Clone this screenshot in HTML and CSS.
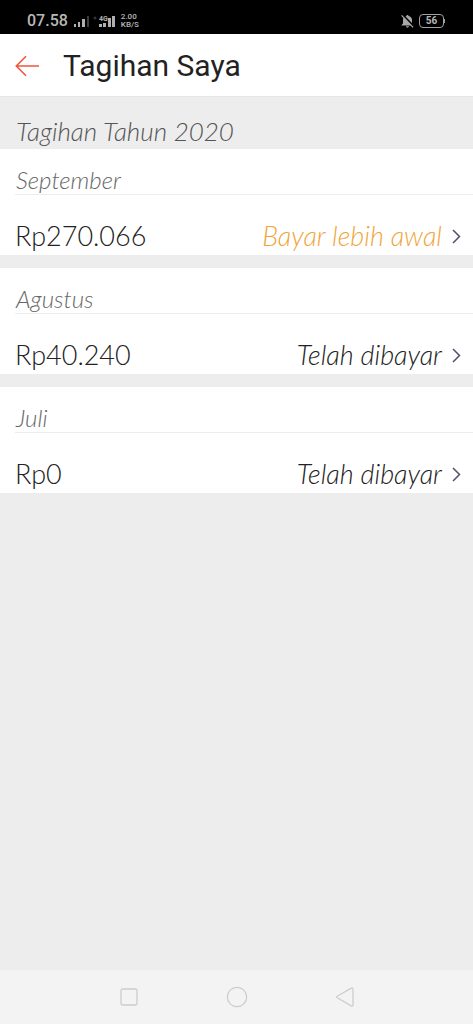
FILE: index.html
```html
<!DOCTYPE html>
<html lang="id">
<head>
<meta charset="utf-8">
<meta name="viewport" content="width=device-width, initial-scale=1">
<title>Tagihan Saya</title>
<link rel="stylesheet" href="styles.css">
</head>
<body>
<div class="status">
  <div class="status-group">
    <span class="clock">07.58</span>
    <svg class="signals" width="43" height="14" viewBox="0 0 43 14" aria-hidden="true">
      <g fill="#b0b0b0">
        <rect x="1" y="10" width="2" height="3"/><rect x="5" y="8" width="2" height="5"/><rect x="9" y="5" width="3" height="8"/>
        <rect x="26" y="10" width="3" height="3"/><rect x="30" y="9" width="3" height="4"/><rect x="35" y="4" width="3" height="9"/><rect x="39" y="2" width="3" height="11"/>
      </g>
      <rect x="14" y="2" width="2" height="11" fill="#3c3c3c"/>
      <circle cx="22" cy="4" r="1" fill="none" stroke="#444"/>
      <text class="net" x="26" y="7">4G</text>
    </svg>
    <span class="speed"><span>2.00</span><span>KB/S</span></span>
  </div>
  <div class="status-group">
    <svg width="13" height="14" viewBox="0 0 13 14" aria-hidden="true">
      <path d="M6.500 1c.7 0 1 .4 1 1 2.300.5 3.500 2 3.500 4v3.500l1.500 1.500v.6H.5V11L2 9.500V6c0-2 1.200-3.500 3.500-4 0-.6.300-1 1-1zM5 12.300h3c0 1.800-3 1.800-3 0z" fill="#a8a8a8"/>
      <path d="M1.600 .6l11.500 12" stroke="#000" stroke-width="1.800"/>
      <path d="M.6 1.400l11.500 12" stroke="#a8a8a8" stroke-width="1.300"/>
    </svg>
    <span class="battery">56</span>
  </div>
</div>

<header class="bar">
  <button class="back" aria-label="Kembali">
    <svg width="25" height="22" viewBox="0 0 25 22" aria-hidden="true"><path d="M24 11H1.500M11 1.300L1.300 11l9.700 9.700" fill="none" stroke="#f0573c" stroke-width="1.600"/></svg>
  </button>
  <h1 class="title">Tagihan Saya</h1>
</header>

<main class="bills">
  <h2 class="year">Tagihan Tahun 2020</h2>
  <section class="bill">
    <h3 class="month">September</h3>
    <div class="row">
      <span class="amount">Rp270.066</span>
      <button class="action early">Bayar lebih awal
        <svg width="9" height="15" viewBox="0 0 9 15" aria-hidden="true"><path class="chevron" d="M1 1l6.500 6.500L1 14"/></svg>
      </button>
    </div>
  </section>
  <section class="bill">
    <h3 class="month">Agustus</h3>
    <div class="row">
      <span class="amount">Rp40.240</span>
      <button class="action">Telah dibayar
        <svg width="9" height="15" viewBox="0 0 9 15" aria-hidden="true"><path class="chevron" d="M1 1l6.500 6.500L1 14"/></svg>
      </button>
    </div>
  </section>
  <section class="bill">
    <h3 class="month">Juli</h3>
    <div class="row">
      <span class="amount">Rp0</span>
      <button class="action">Telah dibayar
        <svg width="9" height="15" viewBox="0 0 9 15" aria-hidden="true"><path class="chevron" d="M1 1l6.500 6.500L1 14"/></svg>
      </button>
    </div>
  </section>
</main>

<nav class="nav">
  <button class="key" aria-label="Aplikasi terbaru"><svg width="22" height="22" viewBox="0 0 22 22"><rect class="line" x="3" y="3" width="16" height="16" rx="1.500"/></svg></button>
  <button class="key" aria-label="Beranda"><svg width="22" height="22" viewBox="0 0 22 22"><circle class="line" cx="11" cy="11" r="9.700"/></svg></button>
  <button class="key" aria-label="Kembali"><svg width="22" height="22" viewBox="0 0 22 22"><path class="line" d="M3.200 10.200L17.300 2.100q1.700-.8 1.700 1V18.900q0 1.800-1.700 1L3.200 11.800q-1-.8 0-1.600z"/></svg></button>
</nav>
</body>
</html>
```
FILE: styles.css
```css
* { box-sizing: border-box; }

body {
  margin: 0;
  min-height: 100vh;
  display: flex;
  flex-direction: column;
  background: #ededed;
  color: #222;
  font-family: Roboto, "Liberation Sans", sans-serif;
}

button {
  padding: 0;
  border: 0;
  background: none;
  color: inherit;
  font: inherit;
  cursor: pointer;
}

svg { display: block; flex: none; }

h1, h2, h3 { margin: 0; font-weight: 400; }

.status {
  display: flex;
  justify-content: space-between;
  align-items: center;
  height: 34px;
  padding: 7px 29px 0 27px;
  background: #000;
  color: #b8b8b8;
}

.status-group { display: flex; align-items: center; gap: 5px; }

.clock { font-size: 16px; line-height: 20px; font-weight: 500; }

.net { font-size: 7px; font-weight: 700; fill: #b0b0b0; }

.speed {
  display: flex;
  flex-direction: column;
  font-size: 8px;
  line-height: 8px;
  font-weight: 500;
}

.battery {
  position: relative;
  width: 25px;
  border: 1px solid #a0a0a0;
  border-radius: 4px;
  font-size: 10px;
  line-height: 12px;
  font-weight: 700;
  text-align: center;
}

.battery::after {
  content: "";
  position: absolute;
  top: 4px;
  right: -2px;
  width: 1px;
  height: 4px;
  background: #a0a0a0;
}

.bar {
  display: flex;
  align-items: center;
  gap: 23px;
  height: 63px;
  padding: 2px 15px 0;
  border-bottom: 1px solid #e6e6e6;
  background: #fff;
}

.title { font-size: 30px; line-height: 36px; }

.bills {
  flex: 1;
  font-family: Lato, "Open Sans", sans-serif;
  font-weight: 300;
}

.year {
  padding: 19px 16px 3px;
  color: #555;
  font-size: 26px;
  line-height: 30px;
  font-weight: 300;
  font-style: italic;
}

.bill { background: #fff; }

.bill + .bill { margin-top: 13px; }

.month {
  margin-left: 15px;
  padding: 17px 0 0 1px;
  border-bottom: 1px solid #ededed;
  color: #666;
  font-size: 24px;
  line-height: 28px;
  font-weight: 300;
  font-style: italic;
}

.row {
  display: flex;
  justify-content: space-between;
  align-items: center;
  padding: 25px 12px 3px 15px;
}

.amount { font-size: 27px; line-height: 32px; }

.action {
  display: flex;
  align-items: center;
  gap: 10px;
  font-size: 27px;
  line-height: 32px;
  font-style: italic;
}

.early { color: #f0a63c; }

.chevron { fill: none; stroke: #50506e; stroke-width: 1.5; }

.nav {
  display: flex;
  justify-content: center;
  gap: 86px;
  padding: 16px 0;
  background: #f3f3f3;
}

.line { fill: none; stroke: #cdcdcd; stroke-width: 1.3; }
```
